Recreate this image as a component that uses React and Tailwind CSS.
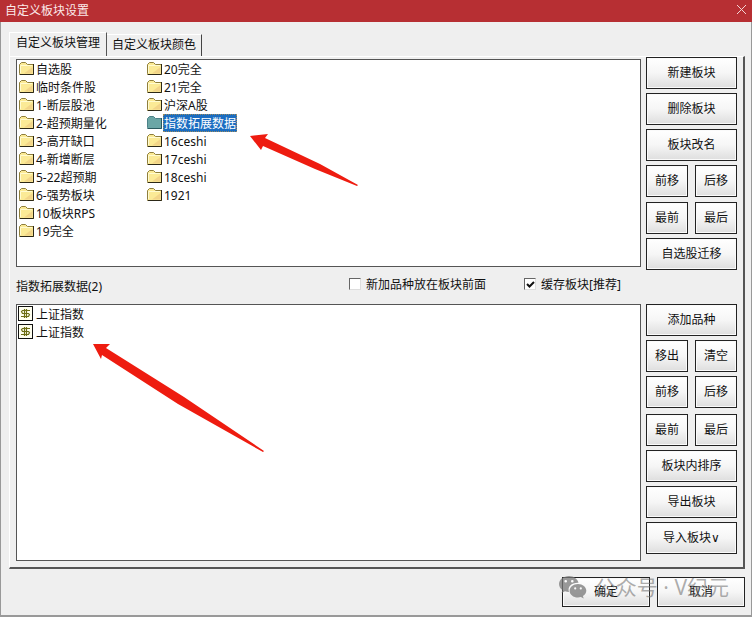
import React from "react";

const folders = [
  ["自选股", "临时条件股", "1-断层股池", "2-超预期量化", "3-高开缺口", "4-新增断层", "5-22超预期", "6-强势板块", "10板块RPS", "19完全"],
  ["20完全", "21完全", "沪深A股", "指数拓展数据", "16ceshi", "17ceshi", "18ceshi", "1921"],
];
const selected = "指数拓展数据";

function Folder({ active }) {
  return (
    <svg width="16" height="18" viewBox="0 0 16 18" className="shrink-0" aria-hidden="true">
      <path
        d="M.5 13.5V4.500L2.500 2.500H6.500L8.500 4.500H14.500V14.500H.5Z"
        fill={active ? "#6ba6a6" : "#fbea96"}
        stroke={active ? "#4c8288" : "#8f7f3c"}
      />
      {!active && <path d="M1.500 13V5.500H13" fill="none" stroke="#fffbd0" />}
      {!active && <path d="M5 13.500L13.500 7V13.500Z" fill="#f2d488" />}
      <path d="M14.500 4V14.500H1" fill="none" stroke={active ? "#2b5a60" : "#2c2817"} />
    </svg>
  );
}

function Stock() {
  return (
    <svg width="15" height="18" viewBox="0 0 15 18" className="shrink-0" aria-hidden="true">
      <rect x=".5" y="1.500" width="14" height="14" fill="#fffff0" stroke="#111" />
      <path d="M12 5.500H4.500L3.500 6.500L4.500 8.500H10.500L11.500 9.500L10.500 11.500H3M6.500 4V13M8.500 4V13" fill="none" stroke="#6e6e14" strokeWidth="1.200" />
    </svg>
  );
}

function Button({ children, className = "h-8" }) {
  return (
    <button
      type="button"
      className={`border border-[#222] bg-linear-to-b from-white via-[#f6f6f6] to-[#dedede] text-center leading-none shadow-[inset_0_0_0_1px_#fafafa] ${className}`}
    >
      {children}
    </button>
  );
}

function Pair({ left, right }) {
  return (
    <div className="grid grid-cols-2 gap-[7px]">
      <Button>{left}</Button>
      <Button>{right}</Button>
    </div>
  );
}

function Check({ label, checked }) {
  return (
    <label className="flex items-center gap-[5px]">
      <input type="checkbox" defaultChecked={checked} className="peer sr-only" />
      <span className="flex size-3 items-center justify-center border border-t-[#666] border-r-[#ddd] border-b-[#ddd] border-l-[#666] bg-white peer-checked:[&>svg]:block">
        <svg className="hidden" width="9" height="9" viewBox="0 0 9 9" aria-hidden="true">
          <path d="M1 4L3.500 6.500L8 2" fill="none" stroke="#111" strokeWidth="2" />
        </svg>
      </span>
      <span className="pt-[2px] leading-[26px]">{label}</span>
    </label>
  );
}

export default function App() {
  return (
    <div className="relative flex min-h-screen flex-col bg-[#efefef] font-['Noto_Sans','Noto_Sans_CJK_SC',sans-serif] text-xs text-[#111]">
      <header className="flex h-[22px] items-center justify-between bg-[#b72f33] pr-[5px] pl-[5px] text-[#fbe9e9]">
        <h1>自定义板块设置</h1>
        <button type="button" aria-label="关闭">
          <svg width="11" height="14" viewBox="0 0 11 14">
            <path d="M1 1L10 10M10 1L1 10" stroke="#f3d5d5" fill="none" />
          </svg>
        </button>
      </header>

      <main className="flex flex-1 flex-col border-r border-b-2 border-l border-[#999] pt-[10px] pr-[6px] pl-2">
        <div role="tablist" className="flex h-6 items-end">
          <button role="tab" aria-selected="true" type="button" className="-mb-px h-[25px] border border-t-white border-r-[#555] border-b-[#efefef] border-l-white bg-[#efefef] px-[6px] pb-1">
            自定义板块管理
          </button>
          <button role="tab" aria-selected="false" type="button" className="h-[22px] border-t border-r border-t-white border-r-[#444] px-[5px] pb-px">
            自定义板块颜色
          </button>
        </div>

        <section className="grid flex-1 grid-cols-[1fr_91px] grid-rows-[auto_auto_1fr] gap-x-[5px] border border-t-white border-r-2 border-b-2 border-l-white border-r-[#555] border-b-[#555] pr-[6px] pb-[6px] pl-[6px]">
          <div className="relative mt-[2px] mb-[3px] flex border border-[#555] bg-white px-[2px]">
            {folders.map((column, i) => (
              <ul key={i} className="w-32">
                {column.map((name) => (
                  <li key={name} className="flex h-[18px] items-center">
                    <Folder active={name === selected} />
                    <span className={name === selected ? "bg-[#1b6dc1] px-px pt-px leading-[17px] text-white outline-1 -outline-offset-1 outline-dotted outline-[#9a8a60]" : "px-px pt-px leading-[17px]"}>
                      {name}
                    </span>
                  </li>
                ))}
              </ul>
            ))}
            <svg className="absolute top-[72px] left-[232px]" width="112" height="56" viewBox="0 0 112 56" aria-hidden="true">
              <path d="M1 4L19 2L16 6L71 32L109 53L108 54L66 37L14 14L12 18Z" fill="#ee1c10" />
            </svg>
          </div>
          <div className="flex flex-col gap-1">
            <Button>新建板块</Button>
            <Button>删除板块</Button>
            <Button>板块改名</Button>
            <Pair left="前移" right="后移" />
            <div className="mt-px grid">
              <Pair left="最前" right="最后" />
            </div>
            <Button>自选股迁移</Button>
          </div>

          <div className="col-span-2 grid grid-cols-[1fr_91px] gap-x-[5px]">
            <div className="flex h-[34px] items-start">
              <h2 className="leading-[34px]">指数拓展数据(2)</h2>
              <div className="ml-auto flex gap-[38px] pr-5 leading-7">
                <Check label="新加品种放在板块前面" />
                <Check label="缓存板块[推荐]" checked />
              </div>
            </div>
          </div>

          <div className="relative border border-[#555] bg-white px-px">
            <ul>
              {[0, 1].map((i) => (
                <li key={i} className="flex h-[18px] items-center gap-[3px]">
                  <Stock />
                  <span className="pt-px leading-[17px]">上证指数</span>
                </li>
              ))}
            </ul>
            <svg className="absolute top-[37px] left-[75px]" width="174" height="112" viewBox="0 0 174 112" aria-hidden="true">
              <path d="M1 2L18 2L14 6L92 55L172 109L171 110L86 62L10 13L9 17Z" fill="#ee1c10" />
            </svg>
          </div>
          <div className="flex flex-col gap-1">
            <Button>添加品种</Button>
            <Pair left="移出" right="清空" />
            <Pair left="前移" right="后移" />
            <div className="mt-[2px] grid">
              <Pair left="最前" right="最后" />
            </div>
            <Button>板块内排序</Button>
            <Button>导出板块</Button>
            <Button>
              导入板块<span className="font-['DejaVu_Sans',sans-serif]">∨</span>
            </Button>
          </div>
        </section>

        <footer className="relative flex justify-end gap-[7px] py-2">
          <Button className="h-[30px] w-[88px]">确定</Button>
          <Button className="h-[30px] w-[88px]">取消</Button>
          <div className="pointer-events-none absolute top-1 right-[16px] flex items-center gap-[8px] text-[21px] leading-7 text-[#777]/60">
            <svg width="28" height="24" viewBox="0 0 28 24" aria-hidden="true">
              <path
                fillRule="evenodd"
                d="M10 1C4.500 1 0 4.600 0 9c0 2.500 1.400 4.700 3.500 6.100L2.600 18l3.400-1.700c1.200.4 2.600.6 4 .6C8.200 11.500 12.500 7.500 19.500 7.700 18.500 3.900 14.700 1 10 1ZM6.700 5a1.300 1.300 0 1 1 0 2.600 1.300 1.300 0 0 1 0-2.600Zm6.600 0a1.300 1.300 0 1 1 0 2.600 1.300 1.300 0 0 1 0-2.600ZM19 9c-4.700 0-8.400 3-8.400 6.800s3.700 6.800 8.400 6.800c1 0 2-.2 2.900-.5l2.800 1.500-.8-2.500c2-1.200 3.400-3.200 3.400-5.300C27.300 12 23.700 9 19 9Zm-2.800 3.300a1.100 1.100 0 1 1 0 2.200 1.100 1.100 0 0 1 0-2.200Zm5.600 0a1.100 1.100 0 1 1 0 2.200 1.100 1.100 0 0 1 0-2.200Z"
                fill="#777"
                fillOpacity=".75"
              />
            </svg>
            公众号 · V纪元
          </div>
        </footer>
      </main>
    </div>
  );
}
